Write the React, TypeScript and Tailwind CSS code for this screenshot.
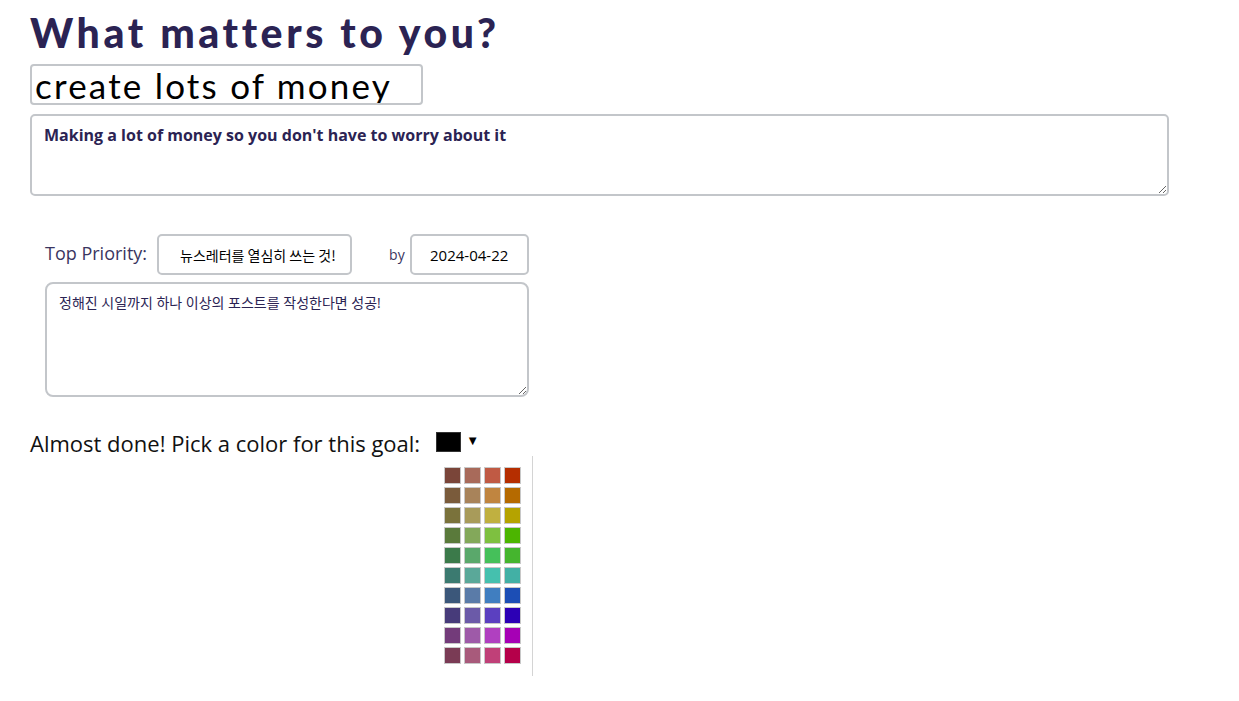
import React from "react";

const swatches: string[][] = [
  ["#7a4539", "#a86a5a", "#c05a44", "#b52e00"],
  ["#7a5b3b", "#a8835a", "#c08540", "#b56a00"],
  ["#7a723b", "#a89b5a", "#c0b040", "#b5a300"],
  ["#5a7a3b", "#83a85a", "#7ec040", "#4cb500"],
  ["#3b7a4a", "#5aa86b", "#45c05a", "#45b52e"],
  ["#3b7a70", "#5aa899", "#45c0ae", "#42b0a5"],
  ["#3b577a", "#5a7ba8", "#407ec0", "#1c4eb5"],
  ["#473b7a", "#6b5aa8", "#5b40c0", "#2c00b5"],
  ["#733b7a", "#9e5aa8", "#b040c0", "#a600b5"],
  ["#7a3b55", "#a85a7b", "#c04078", "#b5004a"],
];

const App = () => {
  return (
    <div className="min-h-[701px] bg-white pl-[30px] pt-[9px] font-['Open_Sans',sans-serif] text-[#2b2353]">
      {/* Heading */}
      <h1 className="font-['Lato',sans-serif] text-[41px] leading-[48px] font-black tracking-[3.6px] text-[#2b2353]">
        What matters to you?
      </h1>
      <input
        readOnly
        value="create lots of money"
        className="mt-[7px] block h-[41px] w-[393px] rounded-[4px] border-2 border-[#c3c6ca] px-[3px] font-['Lato',sans-serif] text-[35px] leading-none tracking-[2.2px] text-black outline-none"
      />
      <textarea
        readOnly
        value="Making a lot of money so you don't have to worry about it"
        className="mt-[9px] block h-[82px] w-[1139px] rounded-[5px] border-2 border-[#c3c6ca] px-[12px] py-[8px] text-[16px] leading-[22px] font-bold text-[#2b2353] outline-none"
      />

      {/* Top priority */}
      <div className="ml-[15px] mt-[38px] flex items-center">
        <span className="-mt-[2px] text-[18px] text-[#3a3560]">Top Priority:</span>
        <input
          readOnly
          value="뉴스레터를 열심히 쓰는 것!"
          className="ml-[10px] h-[41px] w-[195px] rounded-[5px] border-2 border-[#c3c6ca] pl-[21px] font-['Noto_Sans_CJK_KR',sans-serif] text-[14px] text-black outline-none"
        />
        <span className="ml-[37px] text-[14px] text-[#3a3560]">by</span>
        <input
          readOnly
          value="2024-04-22"
          className="ml-[5px] h-[41px] w-[119px] rounded-[5px] border-2 border-[#c3c6ca] text-center text-[15px] text-black outline-none"
        />
      </div>
      <textarea
        readOnly
        value="정해진 시일까지 하나 이상의 포스트를 작성한다면 성공!"
        className="ml-[15px] mt-[7px] block h-[115px] w-[484px] rounded-[8px] border-2 border-[#c3c6ca] px-[12px] py-[9px] font-['Open_Sans','Noto_Sans_CJK_KR',sans-serif] text-[14px] leading-[20px] text-[#2b2353] outline-none"
      />

      {/* Color picker */}
      <div className="mt-[31px] flex items-start">
        <span className="text-[22px] leading-[30px] text-[#111]">Almost done! Pick a color for this goal:</span>
        <div className="ml-[17px] flex flex-col">
          <div className="mt-[4px] flex items-center">
            <div className="-ml-px h-[20px] w-[25px] border border-[#333] bg-black" />
            <span className="ml-[5px] -mt-[3px] text-[13px] leading-none text-black">▼</span>
          </div>
          <div className="mt-[4px] flex">
            <div className="flex flex-col gap-[3px] pl-[7px] pr-[11px] pt-[11px] pb-[12px]">
              {swatches.map((row, r) => (
                <div key={r} className="flex gap-[3px]">
                  {row.map((c) => (
                    <div key={c} className="h-[17px] w-[17px] border border-[#c8c8c8]" style={{ backgroundColor: c }} />
                  ))}
                </div>
              ))}
            </div>
            <div className="w-px bg-[#d4d4d4]" />
          </div>
        </div>
      </div>
    </div>
  );
};

export default App;
